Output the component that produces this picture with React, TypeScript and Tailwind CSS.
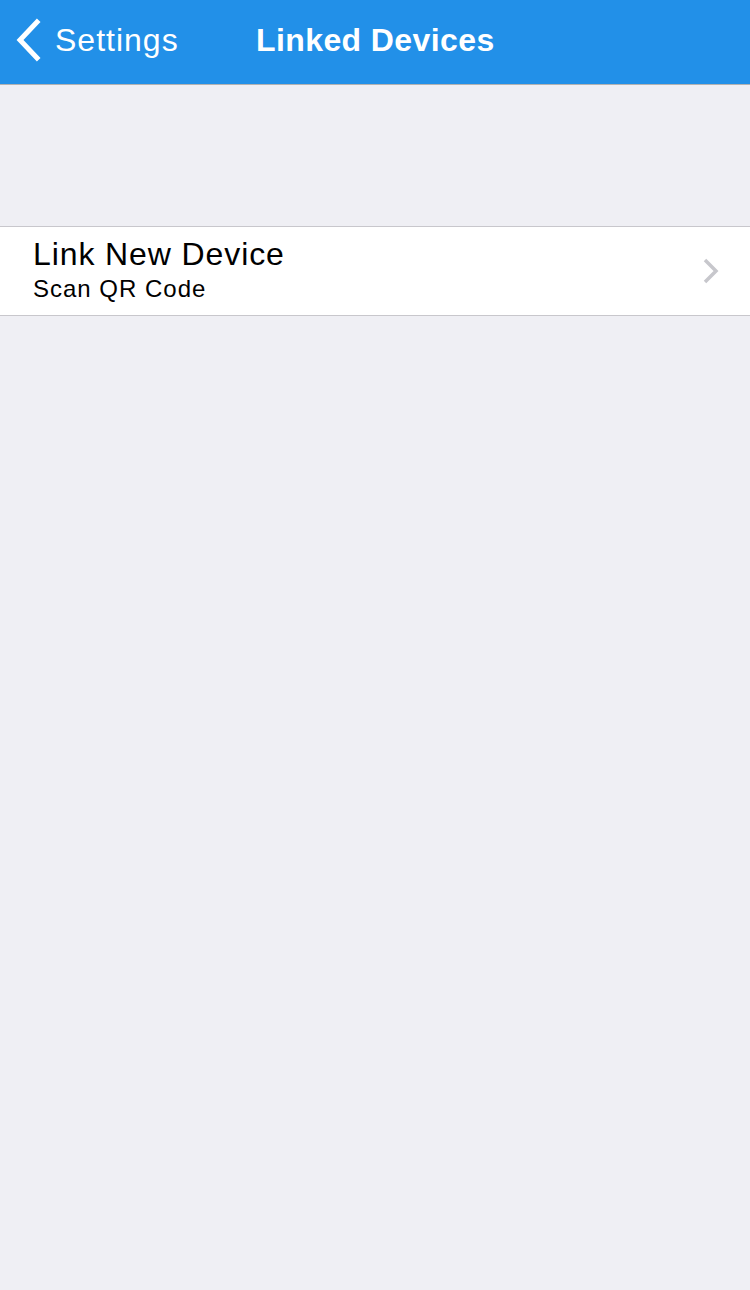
import React from 'react';

const BackChevron = () => (
  <svg width="28" height="44" viewBox="0 0 28 44" className="shrink-0">
    <path d="M22 4 L5 22 L22 40" fill="none" stroke="white" strokeWidth="5" strokeLinecap="square" />
  </svg>
);

const RowChevron = () => (
  <svg width="18" height="28" viewBox="0 0 18 28">
    <path d="M3 3 L14 14 L3 25" fill="none" stroke="#c7c7cc" strokeWidth="3.5" />
  </svg>
);

const App: React.FC = () => {
  return (
    <div className="w-[750px] h-[1290px] bg-[#efeff4] font-['Liberation_Sans',Arial,sans-serif]">
      <header className="h-[85px] bg-[#2290e8] border-b border-[#b2b2b2] flex items-center pb-[4px]">
        <div className="flex items-center pl-[15px] w-[256px]">
          <BackChevron />
          <span className="ml-[12px] text-white text-[32px] tracking-[1px]">Settings</span>
        </div>
        <h1 className="text-white text-[32px] font-bold tracking-[0.4px]">Linked Devices</h1>
      </header>
      <div className="h-[141px]" />
      <div className="bg-white border-y border-[#c8c7cc] h-[90px] flex items-center justify-between pl-[33px] pr-[30px]">
        <div className="flex flex-col">
          <span className="text-black text-[32px] leading-[36px] tracking-[0.9px]">Link New Device</span>
          <span className="text-black text-[24px] leading-[34px] tracking-[1px]">Scan QR Code</span>
        </div>
        <RowChevron />
      </div>
    </div>
  );
};

export default App;
